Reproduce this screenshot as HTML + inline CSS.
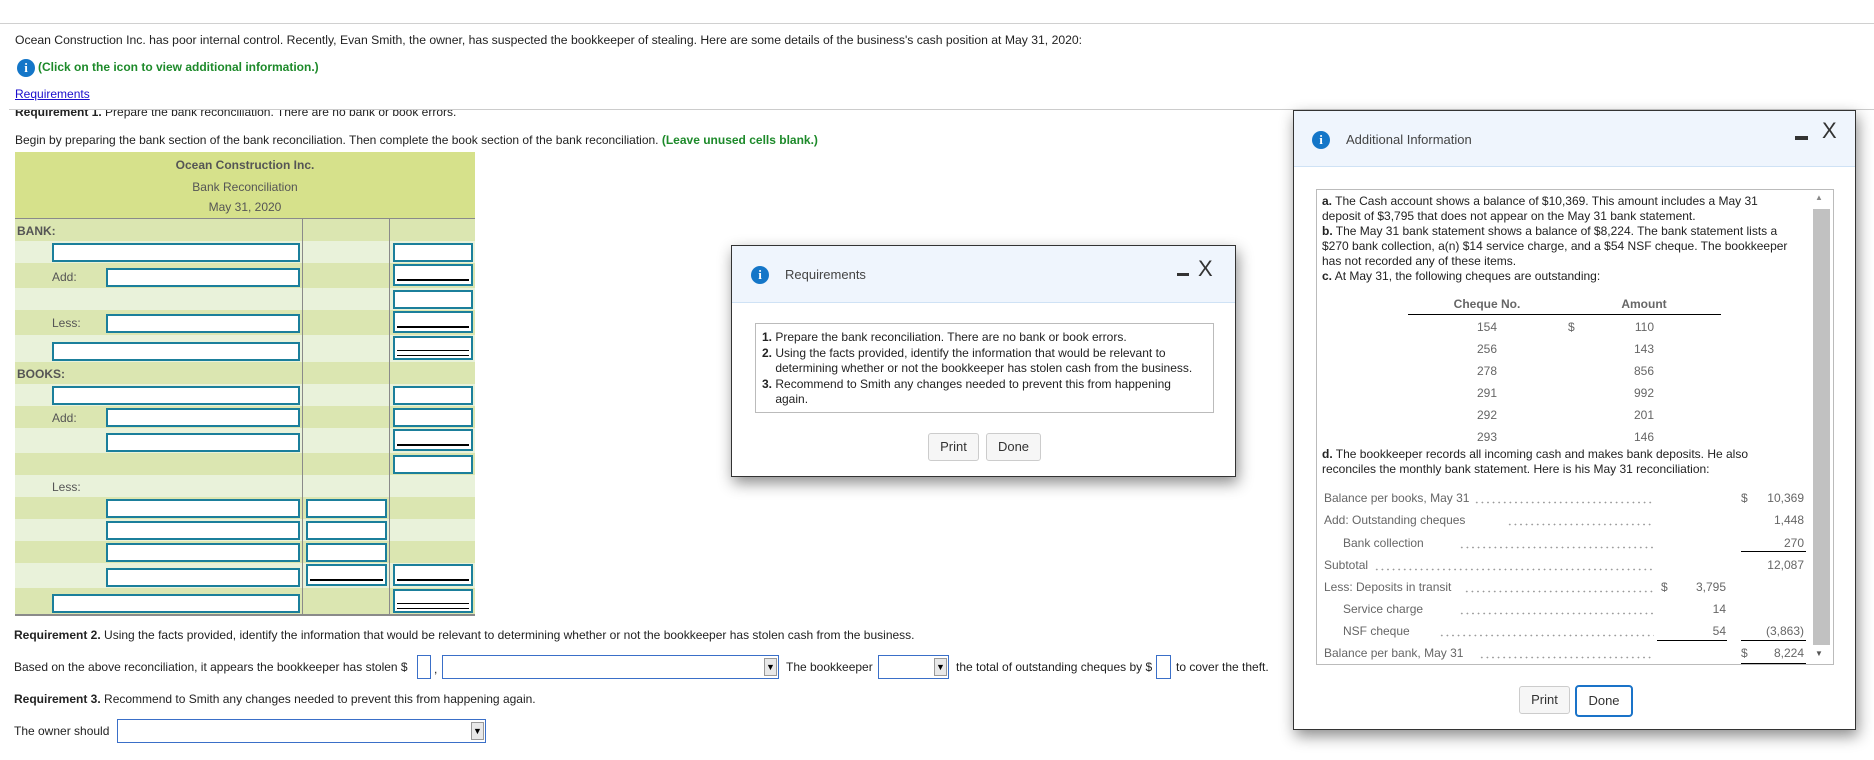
<!DOCTYPE html>
<html><head><meta charset="utf-8">
<style>
*{box-sizing:border-box;margin:0;padding:0}
body{width:1874px;height:760px;position:relative;overflow:hidden;background:#fff;font-family:"Liberation Sans",Arial,sans-serif;font-size:12px;color:#222}
.a{position:absolute;white-space:nowrap;line-height:14px}
.r{position:absolute;left:15px;width:460px}
.d{background:#dbe6b1}.l{background:#e9f2da}
.i{position:absolute;background:#fff;border:2px solid #1b7f9b;height:19px}
.u::after{content:"";position:absolute;left:2px;right:2px;bottom:3px;height:2px;background:#000}
.dd::after{content:"";position:absolute;left:2px;right:2px;bottom:2px;height:4px;border-top:1px solid #000;border-bottom:1px solid #000}
.lab{position:absolute;color:#555;line-height:14px}
.sel{position:absolute;border:1px solid #3a6fc8;background:#fff;height:24px}
.sel b{position:absolute;right:1px;top:2px;width:13px;height:18px;background:#e8e8e8;border:1px solid #999;font-size:9px;line-height:16px;text-align:center;color:#000;font-weight:normal}
.sb{position:absolute;border:1px solid #3a6fc8;background:#fff;height:24px}
.dlg{position:absolute;background:#fff;border:1px solid #333;box-shadow:2px 6px 14px rgba(0,0,0,.45)}
.hd{position:absolute;left:0;right:0;top:0;background:#eff5fd;border-bottom:1px solid #cfe2f5}
.ic{position:absolute;width:18px;height:18px;border-radius:50%;background:#1476c8;color:#fff;font:bold 13px/18px "Liberation Serif",serif;text-align:center}
.btn{position:absolute;background:#f6f6f6;border:1px solid #ccc;border-radius:3px;color:#333;font-size:13px;text-align:center}
.dots{position:absolute;height:3px;background-image:radial-gradient(circle,#999 0.7px,transparent 1px);background-size:5.6px 3px;background-repeat:repeat-x}
.g{color:#666}
.rw{position:absolute;white-space:nowrap;line-height:16px;color:#666}
</style></head><body>
<div style="position:absolute;left:0;top:23px;width:1874px;height:1px;background:#d0d0d0"></div>
<div class="a" style="left:15px;top:33px;font-size:12.2px">Ocean Construction Inc. has poor internal control. Recently, Evan Smith, the owner, has suspected the bookkeeper of stealing. Here are some details of the business's cash position at May 31, 2020:</div>
<div class="ic" style="left:17px;top:59px">i</div>
<div class="a" style="left:38px;top:60px;color:#1d8a2a;font-weight:bold">(Click on the icon to view additional information.)</div>
<div class="a" style="left:15px;top:87px;color:#1a0dcc;text-decoration:underline">Requirements</div>
<div style="position:absolute;left:9px;top:109px;width:1865px;height:1px;background:#ccc"></div>
<div style="position:absolute;left:15px;top:110px;height:9px;overflow:hidden;width:600px"><div class="a" style="left:0;top:-5px"><b>Requirement 1.</b> Prepare the bank reconciliation. There are no bank or book errors.</div></div>
<div class="a" style="left:15px;top:133px">Begin by preparing the bank section of the bank reconciliation. Then complete the book section of the bank reconciliation. <b style="color:#1d8a2a">(Leave unused cells blank.)</b></div>

<!-- table -->
<div class="r" style="top:152px;height:66px;background:#d6e18b"></div>
<div class="a" style="left:15px;width:460px;text-align:center;top:158px;color:#555;font-weight:bold">Ocean Construction Inc.</div>
<div class="a" style="left:15px;width:460px;text-align:center;top:180px;color:#555">Bank Reconciliation</div>
<div class="a" style="left:15px;width:460px;text-align:center;top:200px;color:#555">May 31, 2020</div>
<div class="r d" style="top:218px;height:23px;border-top:1px solid #8a8a8a"></div>
<div class="r l" style="top:241px;height:22px"></div>
<div class="r d" style="top:263px;height:25px"></div>
<div class="r l" style="top:288px;height:22px"></div>
<div class="r d" style="top:310px;height:25px"></div>
<div class="r l" style="top:335px;height:27px"></div>
<div class="r d" style="top:362px;height:22px"></div>
<div class="r l" style="top:384px;height:22px"></div>
<div class="r d" style="top:406px;height:22px"></div>
<div class="r l" style="top:428px;height:25px"></div>
<div class="r d" style="top:453px;height:22px"></div>
<div class="r l" style="top:475px;height:22px"></div>
<div class="r d" style="top:497px;height:22px"></div>
<div class="r l" style="top:519px;height:22px"></div>
<div class="r d" style="top:541px;height:22px"></div>
<div class="r l" style="top:563px;height:25px"></div>
<div class="r d" style="top:588px;height:27px"></div>
<div style="position:absolute;left:15px;top:614px;width:460px;height:2px;background:#8a8a8a"></div>
<div style="position:absolute;left:302px;top:218px;width:1px;height:397px;background:#8a8a8a"></div>
<div style="position:absolute;left:389px;top:218px;width:1px;height:397px;background:#8a8a8a"></div>
<div class="lab" style="left:17px;top:224px;font-weight:bold">BANK:</div>
<div class="lab" style="left:52px;top:270px">Add:</div>
<div class="lab" style="left:52px;top:316px">Less:</div>
<div class="lab" style="left:17px;top:367px;font-weight:bold">BOOKS:</div>
<div class="lab" style="left:52px;top:411px">Add:</div>
<div class="lab" style="left:52px;top:480px">Less:</div>

<div class="i" style="left:52px;top:243px;width:248px"></div>
<div class="i" style="left:393px;top:243px;width:80px"></div>
<div class="i" style="left:106px;top:268px;width:194px"></div>
<div class="i u" style="left:393px;top:264px;width:80px;height:22px"></div>
<div class="i" style="left:393px;top:290px;width:80px"></div>
<div class="i" style="left:106px;top:314px;width:194px"></div>
<div class="i u" style="left:393px;top:311px;width:80px;height:22px"></div>
<div class="i" style="left:52px;top:342px;width:248px"></div>
<div class="i dd" style="left:393px;top:336px;width:80px;height:24px"></div>
<div class="i" style="left:52px;top:386px;width:248px"></div>
<div class="i" style="left:393px;top:386px;width:80px"></div>
<div class="i" style="left:106px;top:408px;width:194px"></div>
<div class="i" style="left:393px;top:408px;width:80px"></div>
<div class="i" style="left:106px;top:433px;width:194px"></div>
<div class="i u" style="left:393px;top:429px;width:80px;height:22px"></div>
<div class="i" style="left:393px;top:455px;width:80px"></div>
<div class="i" style="left:106px;top:499px;width:194px"></div>
<div class="i" style="left:306px;top:499px;width:81px"></div>
<div class="i" style="left:106px;top:521px;width:194px"></div>
<div class="i" style="left:306px;top:521px;width:81px"></div>
<div class="i" style="left:106px;top:543px;width:194px"></div>
<div class="i" style="left:306px;top:543px;width:81px"></div>
<div class="i" style="left:106px;top:568px;width:194px"></div>
<div class="i u" style="left:306px;top:564px;width:81px;height:22px"></div>
<div class="i u" style="left:393px;top:564px;width:80px;height:22px"></div>
<div class="i" style="left:52px;top:594px;width:248px"></div>
<div class="i dd" style="left:393px;top:589px;width:80px;height:24px"></div>

<!-- bottom -->
<div class="a" style="left:14px;top:628px"><b>Requirement 2.</b> Using the facts provided, identify the information that would be relevant to determining whether or not the bookkeeper has stolen cash from the business.</div>
<div class="a" style="left:14px;top:660px">Based on the above reconciliation, it appears the bookkeeper has stolen $</div>
<div class="sb" style="left:417px;top:655px;width:14px"></div>
<div class="a" style="left:434px;top:662px">,</div>
<div class="sel" style="left:442px;top:655px;width:337px"><b>▼</b></div>
<div class="a" style="left:786px;top:660px">The bookkeeper</div>
<div class="sel" style="left:878px;top:655px;width:71px"><b>▼</b></div>
<div class="a" style="left:956px;top:660px">the total of outstanding cheques by $</div>
<div class="sb" style="left:1156px;top:655px;width:15px"></div>
<div class="a" style="left:1176px;top:660px">to cover the theft.</div>
<div class="a" style="left:14px;top:692px"><b>Requirement 3.</b> Recommend to Smith any changes needed to prevent this from happening again.</div>
<div class="a" style="left:14px;top:724px">The owner should</div>
<div class="sel" style="left:117px;top:719px;width:369px"><b>▼</b></div>

<!-- Requirements dialog -->
<div class="dlg" style="left:731px;top:245px;width:505px;height:232px">
 <div class="hd" style="height:57px"></div>
 <div class="ic" style="left:19px;top:20px">i</div>
 <div class="a" style="left:53px;top:22px;font-size:13px;color:#444">Requirements</div>
 <div style="position:absolute;left:445px;top:27px;width:12px;height:3px;background:#333"></div>
 <div class="a" style="left:466px;top:12px;font-size:22px;line-height:22px;color:#333">X</div>
 <div style="position:absolute;left:23px;top:77px;width:459px;height:90px;border:1px solid #bbb"></div>
 <div class="a" style="left:30px;top:84px;line-height:15.5px;color:#222"><b>1.</b> Prepare the bank reconciliation. There are no bank or book errors.<br><b>2.</b> Using the facts provided, identify the information that would be relevant to<br>&nbsp;&nbsp;&nbsp;&nbsp;determining whether or not the bookkeeper has stolen cash from the business.<br><b>3.</b> Recommend to Smith any changes needed to prevent this from happening<br>&nbsp;&nbsp;&nbsp;&nbsp;again.</div>
 <div class="btn" style="left:196px;top:187px;width:51px;height:28px;line-height:26px">Print</div>
 <div class="btn" style="left:254px;top:187px;width:55px;height:28px;line-height:26px">Done</div>
</div>

<!-- Additional info dialog -->
<div class="dlg" style="left:1293px;top:110px;width:563px;height:620px">
 <div class="hd" style="height:56px"></div>
 <div class="ic" style="left:18px;top:20px">i</div>
 <div class="a" style="left:52px;top:22px;font-size:13px;color:#444">Additional Information</div>
 <div style="position:absolute;left:501px;top:25px;width:13px;height:4px;background:#333"></div>
 <div class="a" style="left:528px;top:9px;font-size:22px;line-height:22px;color:#333">X</div>
 <div style="position:absolute;left:22px;top:78px;width:518px;height:476px;border:1px solid #bbb"></div>
 <div style="position:absolute;left:519px;top:98px;width:17px;height:436px;background:#c1c1c1"></div>
 <div class="a" style="left:521px;top:80px;font-size:8px;color:#888">▲</div>
 <div class="a" style="left:521px;top:536px;font-size:8px;color:#555">▼</div>
 <div class="a" style="left:28px;top:83px;line-height:15px"><b>a.</b> The Cash account shows a balance of $10,369. This amount includes a May 31<br>deposit of $3,795 that does not appear on the May 31 bank statement.<br><b>b.</b> The May 31 bank statement shows a balance of $8,224. The bank statement lists a<br>$270 bank collection, a(n) $14 service charge, and a $54 NSF cheque. The bookkeeper<br>has not recorded any of these items.<br><b>c.</b> At May 31, the following cheques are outstanding:</div>
 <div class="a g" style="left:150px;top:186px;width:86px;text-align:center;font-weight:bold">Cheque No.</div>
 <div class="a g" style="left:310px;top:186px;width:80px;text-align:center;font-weight:bold">Amount</div>
 <div style="position:absolute;left:114px;top:203px;width:313px;height:1px;background:#000"></div>
 <div class="a g" style="left:150px;top:205px;width:86px;text-align:center;line-height:22px">154<br>256<br>278<br>291<br>292<br>293</div>
 <div class="a g" style="left:274px;top:205px;line-height:22px">$</div>
 <div class="a g" style="left:320px;top:205px;width:40px;text-align:right;line-height:22px">110<br>143<br>856<br>992<br>201<br>146</div>
 <div class="a" style="left:28px;top:336px;line-height:15px"><b>d.</b> The bookkeeper records all incoming cash and makes bank deposits. He also<br>reconciles the monthly bank statement. Here is his May 31 reconciliation:</div>

 <div class="rw" style="left:30px;top:379px">Balance per books, May 31</div>
 <div class="rw" style="left:30px;top:401px">Add: Outstanding cheques</div>
 <div class="rw" style="left:49px;top:424px">Bank collection</div>
 <div class="rw" style="left:30px;top:446px">Subtotal</div>
 <div class="rw" style="left:30px;top:468px">Less: Deposits in transit</div>
 <div class="rw" style="left:49px;top:490px">Service charge</div>
 <div class="rw" style="left:49px;top:512px">NSF cheque</div>
 <div class="rw" style="left:30px;top:534px">Balance per bank, May 31</div>
 <div class="dots" style="left:180px;top:390px;width:180px"></div>
 <div class="dots" style="left:213px;top:412px;width:147px"></div>
 <div class="dots" style="left:165px;top:435px;width:195px"></div>
 <div class="dots" style="left:80px;top:457px;width:280px"></div>
 <div class="dots" style="left:170px;top:479px;width:190px"></div>
 <div class="dots" style="left:165px;top:501px;width:195px"></div>
 <div class="dots" style="left:145px;top:523px;width:215px"></div>
 <div class="dots" style="left:185px;top:545px;width:175px"></div>
 <div class="rw" style="left:367px;top:468px">$</div>
 <div class="rw" style="left:380px;top:468px;width:52px;text-align:right">3,795</div>
 <div class="rw" style="left:380px;top:490px;width:52px;text-align:right">14</div>
 <div class="rw" style="left:380px;top:512px;width:52px;text-align:right">54</div>
 <div style="position:absolute;left:363px;top:529px;width:70px;height:1px;background:#000"></div>
 <div class="rw" style="left:447px;top:379px">$</div>
 <div class="rw" style="left:450px;top:379px;width:60px;text-align:right">10,369</div>
 <div class="rw" style="left:450px;top:401px;width:60px;text-align:right">1,448</div>
 <div class="rw" style="left:450px;top:424px;width:60px;text-align:right">270</div>
 <div class="rw" style="left:450px;top:446px;width:60px;text-align:right">12,087</div>
 <div class="rw" style="left:450px;top:512px;width:60px;text-align:right">(3,863)</div>
 <div style="position:absolute;left:447px;top:440px;width:65px;height:1px;background:#000"></div>
 <div style="position:absolute;left:447px;top:529px;width:65px;height:1px;background:#000"></div>
 <div class="rw" style="left:447px;top:534px">$</div>
 <div class="rw" style="left:450px;top:534px;width:60px;text-align:right">8,224</div>
 <div style="position:absolute;left:447px;top:552px;width:65px;height:1px;background:#000"></div>
 <div class="btn" style="left:225px;top:575px;width:51px;height:28px;line-height:26px">Print</div>
 <div class="btn" style="left:281px;top:574px;width:58px;height:32px;line-height:28px;border:2px solid #1a73c8;border-radius:4px;background:#fff">Done</div>
</div>
</body></html>
